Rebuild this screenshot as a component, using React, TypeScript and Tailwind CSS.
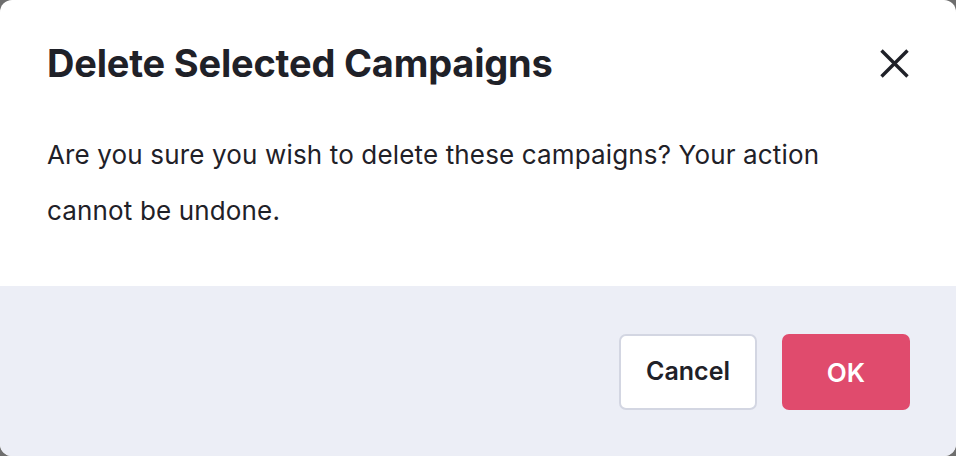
import React from "react";

export default function App() {
  return (
    <div className="w-[956px] h-[456px] bg-[#6e6e6e]" style={{ fontFamily: "Inter, 'Noto Sans', sans-serif" }}>
      <div className="w-full h-full rounded-[12px] overflow-hidden bg-white flex flex-col">
        <div className="h-[286px] pl-[47px] pr-[46px] pt-[40px]">
          <div className="flex items-start justify-between">
            <h1 className="text-[38px] leading-[46px] font-bold text-[#1f2128] tracking-[-0.2px]">Delete Selected Campaigns</h1>
            <button className="mt-[9px] mr-[1px] w-[29px] h-[29px] flex items-center justify-center text-[#1f2128]">
              <svg width="29" height="29" viewBox="0 0 29 29" fill="none" stroke="currentColor" strokeWidth="3.4" strokeLinecap="butt">
                <path d="M1.5 1.5 L27.5 27.5 M27.5 1.5 L1.5 27.5" />
              </svg>
            </button>
          </div>
          <p className="mt-[41px] text-[26px] tracking-[0.15px] leading-[56px] text-[#1f2128] w-[810px]">
            Are you sure you wish to delete these campaigns? Your action cannot be undone.
          </p>
        </div>
        <div className="flex-1 bg-[#eceef6] flex justify-end items-start pt-[48px] pr-[46px] gap-[25px]">
          <button className="w-[138px] h-[76px] rounded-[7px] border-2 border-[#d3d6e2] bg-white text-[25px] font-semibold text-[#1f2128]">
            Cancel
          </button>
          <button className="w-[128px] h-[76px] rounded-[7px] bg-[#e04b6d] text-[26px] font-semibold text-white">
            OK
          </button>
        </div>
      </div>
    </div>
  );
}
